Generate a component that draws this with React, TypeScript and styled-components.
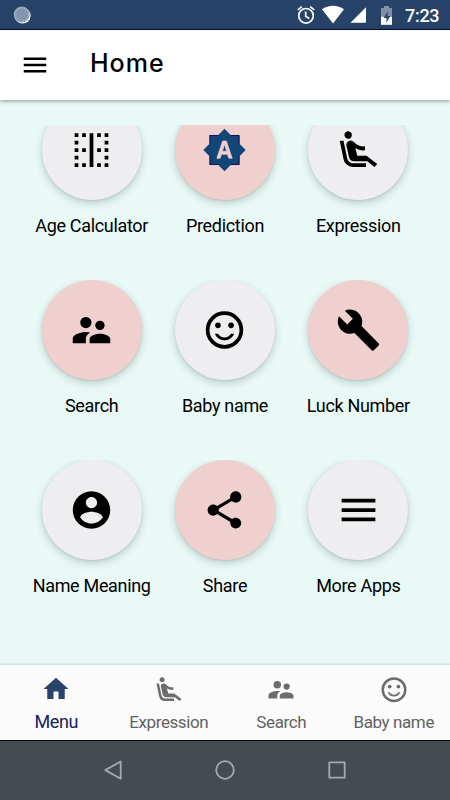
import React from "react";
import styled, { createGlobalStyle } from "styled-components";
import {
  MdBorderVertical,
  MdAirlineSeatReclineExtra,
  MdBuild,
  MdShare,
  MdMenu,
} from "react-icons/md";

const GlobalStyle = createGlobalStyle`
  * { box-sizing: border-box; }
  body { margin: 0; background: #e9f9f6; }
`;

const Screen = styled.div`
  width: 450px;
  height: 800px;
  display: flex;
  flex-direction: column;
  overflow: hidden;
  background: #e9f9f6;
  color: #000;
  font-family: Roboto, "Liberation Sans", sans-serif;
`;

const StatusBar = styled.div`
  height: 30px;
  flex: none;
  display: flex;
  justify-content: space-between;
  padding: 0 11px 0 13px;
  background: #284369;
  border-bottom: 1px solid #050a3a;
  color: #fff;
`;

const StatusIcons = styled.div`
  display: flex;
`;

const Spacer = styled.span`
  width: 6px;
`;

const Clock = styled.span`
  width: 34px;
  margin-left: 13px;
  font-size: 18px;
  line-height: 31px;
  font-weight: 500;
  letter-spacing: -0.3px;
  white-space: nowrap;
`;

const AppBar = styled.header`
  height: 70px;
  flex: none;
  display: flex;
  align-items: center;
  padding-left: 20px;
  background: #fff;
  box-shadow: 0 1px 4px rgba(0, 30, 20, 0.45);
  z-index: 1;
`;

const MenuButton = styled.button`
  display: flex;
  width: 30px;
  height: 30px;
  padding: 0;
  border: 0;
  background: none;
  color: #000;
`;

const Title = styled.h1`
  margin: -4px 0 0 40px;
  font: 500 25px/30px Inter, "Open Sans", sans-serif;
  letter-spacing: 1px;
`;

const Scroller = styled.main`
  flex: 1;
  min-height: 0;
  margin-top: 25px;
  padding: 0 25px;
  overflow: hidden;
`;

const Grid = styled.div`
  display: grid;
  grid-template-columns: repeat(3, 1fr);
  grid-auto-rows: 180px;
  margin-top: -25px;
`;

const Tile = styled.div`
  display: flex;
  flex-direction: column;
  align-items: center;
  overflow: hidden;
`;

const Disc = styled.div<{ $pink?: boolean }>`
  width: 100px;
  height: 100px;
  flex: none;
  display: flex;
  align-items: center;
  justify-content: center;
  border-radius: 50%;
  background: ${(p) => (p.$pink ? "#f0d0cf" : "#eeedf0")};
  box-shadow: 0 3px 8px rgba(0, 40, 30, 0.2), 0 1px 2px rgba(0, 40, 30, 0.1);

  svg {
    transform: translateY(-0.5px);
  }
`;

const TileLabel = styled.span`
  margin-top: 15px;
  font-size: 18px;
  letter-spacing: -0.32px;
  line-height: 22px;
  white-space: nowrap;
`;

const TabBar = styled.nav`
  height: 75px;
  flex: none;
  display: grid;
  grid-template-columns: repeat(4, 1fr);
  background: #fbfbfb;
  box-shadow: 0 -1px 2px rgba(0, 30, 20, 0.16);
`;

const Tab = styled.div<{ $active?: boolean }>`
  display: flex;
  flex-direction: column;
  align-items: center;
  padding-top: 10px;
  color: ${(p) => (p.$active ? "#284369" : "#6c6c6c")};

  svg {
    transform: translateY(${(p) => (p.$active ? -0.9 : -0.3)}px);
  }
`;

const TabLabel = styled.span<{ $active?: boolean }>`
  margin-top: 6px;
  font-size: ${(p) => (p.$active ? 18 : 17)}px;
  letter-spacing: -0.4px;
  line-height: 22px;
  color: ${(p) => (p.$active ? "#14235a" : "#626262")};
  white-space: nowrap;
`;

const SystemBar = styled.div`
  height: 60px;
  flex: none;
  display: flex;
  justify-content: center;
  align-items: center;
  gap: 88px;
  padding-bottom: 1px;
  border-top: 1px solid #050808;
  background: #444c51;
`;

type IconProps = { size?: number };

const People = ({ size = 45 }: IconProps) => (
  <svg width={size} height={size} viewBox="0 0 24 24" fill="currentColor">
    <circle cx="16.5" cy="9.5" r="2.5" />
    <circle cx="9" cy="8" r="3" />
    <path d="M16.5 14c-1.83 0-5.5.92-5.5 2.75V19h11v-2.25c0-1.83-3.67-2.75-5.5-2.75zM9 13c-2.33 0-7 1.17-7 3.5V19h7v-2.25c0-.85.33-2.34 2.37-3.47C10.5 13.1 9.66 13 9 13z" />
  </svg>
);

const Smiley = ({ size = 45 }: IconProps) => (
  <svg width={size} height={size} viewBox="0 0 24 24" fill="currentColor">
    <circle cx="12" cy="12" r="9" fill="none" stroke="currentColor" strokeWidth="2" />
    <circle cx="15.5" cy="9.5" r="1.5" />
    <circle cx="8.5" cy="9.5" r="1.5" />
    <path d="M12 16c-1.48 0-2.75-.81-3.45-2H6.88c.8 2.05 2.79 3.5 5.12 3.5s4.32-1.45 5.12-3.5h-1.67c-.7 1.19-1.97 2-3.45 2z" />
  </svg>
);

const Account = () => (
  <svg width="45" height="45" viewBox="0 0 24 24" fill="currentColor">
    <path d="M12 2C6.48 2 2 6.48 2 12s4.48 10 10 10 10-4.48 10-10S17.52 2 12 2zm0 3c1.66 0 3 1.34 3 3s-1.34 3-3 3-3-1.34-3-3 1.34-3 3-3zm0 14.2c-2.5 0-4.71-1.28-6-3.22.03-1.99 4-3.08 6-3.08 1.99 0 5.97 1.09 6 3.08-1.29 1.94-3.5 3.22-6 3.22z" />
  </svg>
);

const Home = () => (
  <svg width="30" height="30" viewBox="0 0 24 24" fill="currentColor">
    <path d="M10 20v-6h4v6h5v-8h3L12 3 2 12h3v8z" />
  </svg>
);

const AutoBadge = () => (
  <svg width="45" height="45" viewBox="0 0 24 24">
    <path
      fill="#124676"
      d="M20 8.69V4h-4.69L12 .69 8.69 4H4v4.69L.69 12 4 15.31V20h4.69L12 23.31 15.31 20H20v-4.69L23.31 12z"
    />
    <path
      fill="none"
      stroke="#0a1260"
      strokeWidth=".5"
      d="M8.7 4.25H4.25V8.7M15.3 4.25h4.45V8.7M4.25 15.3v4.45H8.7M19.75 15.3v4.45H15.3"
    />
    <path
      fill="#f0d0cf"
      stroke="#f0d0cf"
      strokeWidth=".35"
      fillRule="evenodd"
      d="M10.85 12.65h2.3L12 9zM14.3 16.4l-.7-2.1h-3.2l-.7 2.1H7.9L11 7.2h2l3.1 9.2z"
    />
  </svg>
);

const SyncDot = () => (
  <svg width="18" height="30" viewBox="0 0 18 30">
    <circle cx="9.6" cy="15.6" r="8" fill="#fff" />
    <circle cx="8.7" cy="14.6" r="8" fill="#8595ae" />
    <circle cx="8.7" cy="14.6" r="7" fill="none" stroke="#bac3d1" strokeWidth="1.5" strokeDasharray="1 1.2" />
  </svg>
);

const Alarm = () => (
  <svg width="20" height="30" viewBox="0 0 20 30" fill="none" stroke="#fff" strokeWidth="1.7">
    <circle cx="10" cy="15.8" r="7.3" />
    <path d="M9.7 11.5v4.8l3.5 2.1M1.8 9.9l4-3.3M18.2 9.9l-4-3.3" />
  </svg>
);

const Signals = () => (
  <svg width="70" height="30" viewBox="0 0 70 30" fill="#fff">
    <path d="M0 9.2C6.2 4.5 15.8 4.5 22 9.2L11 23.4z" />
    <path d="M28.5 22.8 44 7.3v14.3q0 1.2-1.2 1.2z" />
    <path fill="#8090a9" d="M59 8h3V6h5v2h3v9H59z" />
    <path d="M59 16.8h11v8H59z" />
    <path fill="#284369" d="M65.7 11.5 61.6 18h2.8v4.5l4-6.6h-2.7z" />
  </svg>
);

const Back = () => (
  <svg width="24" height="24" viewBox="0 0 24 24" fill="none" stroke="#a5a9ab" strokeWidth="1.8" strokeLinejoin="round">
    <path d="M19.7 3.5v17.3L4.3 12.1z" />
  </svg>
);

const Circle = () => (
  <svg width="24" height="24" viewBox="0 0 24 24" fill="none" stroke="#a5a9ab" strokeWidth="1.8">
    <circle cx="12" cy="12" r="8.8" />
  </svg>
);

const Square = () => (
  <svg width="24" height="24" viewBox="0 0 24 24" fill="none" stroke="#a5a9ab" strokeWidth="1.8" strokeLinejoin="round">
    <path d="M4.3 4.3h15.4v15.4H4.3z" />
  </svg>
);

const tiles = [
  { label: "Age Calculator", icon: <MdBorderVertical size={45} /> },
  { label: "Prediction", icon: <AutoBadge />, pink: true },
  { label: "Expression", icon: <MdAirlineSeatReclineExtra size={45} /> },
  { label: "Search", icon: <People />, pink: true },
  { label: "Baby name", icon: <Smiley /> },
  { label: "Luck Number", icon: <MdBuild size={45} />, pink: true },
  { label: "Name Meaning", icon: <Account /> },
  { label: "Share", icon: <MdShare size={45} />, pink: true },
  { label: "More Apps", icon: <MdMenu size={45} /> },
];

const tabs = [
  { label: "Menu", icon: <Home />, active: true },
  { label: "Expression", icon: <MdAirlineSeatReclineExtra size={30} /> },
  { label: "Search", icon: <People size={30} /> },
  { label: "Baby name", icon: <Smiley size={30} /> },
];

export default function App() {
  return (
    <Screen>
      <GlobalStyle />
      <StatusBar>
        <SyncDot />
        <StatusIcons>
          <Alarm />
          <Spacer />
          <Signals />
          <Clock>7:23</Clock>
        </StatusIcons>
      </StatusBar>
      <AppBar>
        <MenuButton aria-label="Open menu">
          <MdMenu size={30} />
        </MenuButton>
        <Title>Home</Title>
      </AppBar>
      <Scroller>
        <Grid>
          {tiles.map((t) => (
            <Tile key={t.label}>
              <Disc $pink={t.pink}>{t.icon}</Disc>
              <TileLabel>{t.label}</TileLabel>
            </Tile>
          ))}
        </Grid>
      </Scroller>
      <TabBar>
        {tabs.map((t) => (
          <Tab key={t.label} $active={t.active}>
            {t.icon}
            <TabLabel $active={t.active}>{t.label}</TabLabel>
          </Tab>
        ))}
      </TabBar>
      <SystemBar>
        <Back />
        <Circle />
        <Square />
      </SystemBar>
    </Screen>
  );
}
